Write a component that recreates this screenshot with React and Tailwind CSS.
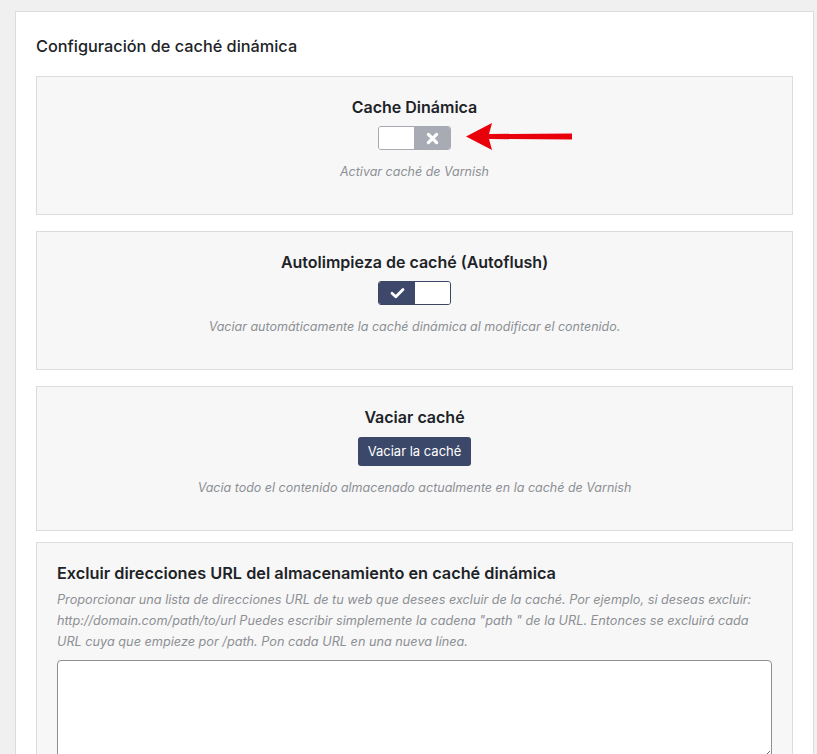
function Toggle({ on }) {
  if (on) {
    return (
      <div className="flex h-6 w-[73px] overflow-hidden rounded-[3px] border border-[#3b4665]">
        <div className="flex w-[36px] items-center justify-center bg-[#3d486a]">
          <svg width="15" height="12" viewBox="0 0 15 12" fill="none">
            <path d="M2 6.2 L5.8 9.8 L13 2.4" stroke="white" strokeWidth="2.8" strokeLinecap="round" strokeLinejoin="round" />
          </svg>
        </div>
        <div className="flex-1 bg-white" />
      </div>
    )
  }
  return (
    <div className="flex h-6 w-[73px] overflow-hidden rounded-[3px] border border-[#a7aab2]">
      <div className="w-[35px] bg-white" />
      <div className="flex flex-1 items-center justify-center bg-[#a8abb3]">
        <svg width="13" height="13" viewBox="0 0 12 12" fill="none">
          <path d="M2.2 2.2 L9.8 9.8 M9.8 2.2 L2.2 9.8" stroke="white" strokeWidth="3" strokeLinecap="round" />
        </svg>
      </div>
    </div>
  )
}

function CenterBox({ title, desc, children, extra }) {
  return (
    <div className="relative flex flex-col items-center border border-[#dcdcde] bg-[#f7f7f7] pb-[33px] pt-5">
      <h3 className="text-[16px] font-semibold leading-5 text-[#1d2327]">{title}</h3>
      <div className="mt-[9px]">{children}</div>
      <p className="mt-[13px] text-[12.5px] italic leading-[18px] text-[#8c8f94]">{desc}</p>
      {extra}
    </div>
  )
}

function RedArrow() {
  return (
    <svg className="absolute left-[428px] top-[44px]" width="108" height="31" viewBox="0 0 108 31">
      <path d="M1 15.5 L27 2 L24 13 L107 12.5 L107 18.5 L24 18 L27 29 Z" fill="#e8000b" />
    </svg>
  )
}

export default function App() {
  return (
    <div className="min-h-[754px] bg-[#f0f0f1] pl-[15px] pr-[3px] pt-[11px]" style={{ fontFamily: 'Inter, "Noto Sans", sans-serif' }}>
      <div className="min-h-[760px] border border-[#dcdcde] bg-white px-5 pt-[24px]">
        <h2 className="text-[16.3px] font-medium leading-5 text-[#1d2327]">Configuración de caché dinámica</h2>
        <div className="mt-5 flex flex-col">
          <CenterBox title="Cache Dinámica" desc="Activar caché de Varnish" extra={<RedArrow />}>
            <Toggle on={false} />
          </CenterBox>
          <div className="mt-4">
            <CenterBox title="Autolimpieza de caché (Autoflush)" desc="Vaciar automáticamente la caché dinámica al modificar el contenido.">
              <Toggle on />
            </CenterBox>
          </div>
          <div className="mt-4">
            <CenterBox title="Vaciar caché" desc="Vacia todo el contenido almacenado actualmente en la caché de Varnish">
              <button className="mt-px h-[29px] rounded-[3px] bg-[#3c4869] px-[10px] text-[13px] text-white">Vaciar la caché</button>
            </CenterBox>
          </div>
          <div className="mt-[11px] border border-[#dcdcde] bg-[#f7f7f7] px-5 pt-5">
            <h3 className="text-[16.3px] font-semibold leading-5 text-[#1d2327]">Excluir direcciones URL del almacenamiento en caché dinámica</h3>
            <p className="mt-[6px] max-w-[706px] text-[12.7px] italic leading-[21px] text-[#8c8f94]">
              Proporcionar una lista de direcciones URL de tu web que desees excluir de la caché. Por ejemplo, si deseas excluir: http://domain.com/path/to/url Puedes escribir simplemente la cadena "path " de la URL. Entonces se excluirá cada URL cuya que empieze por /path. Pon cada URL en una nueva línea.
            </p>
            <textarea className="mt-2 block h-[100px] w-full rounded-[4px] border border-[#8c8f94] bg-white" />
          </div>
        </div>
      </div>
    </div>
  )
}
